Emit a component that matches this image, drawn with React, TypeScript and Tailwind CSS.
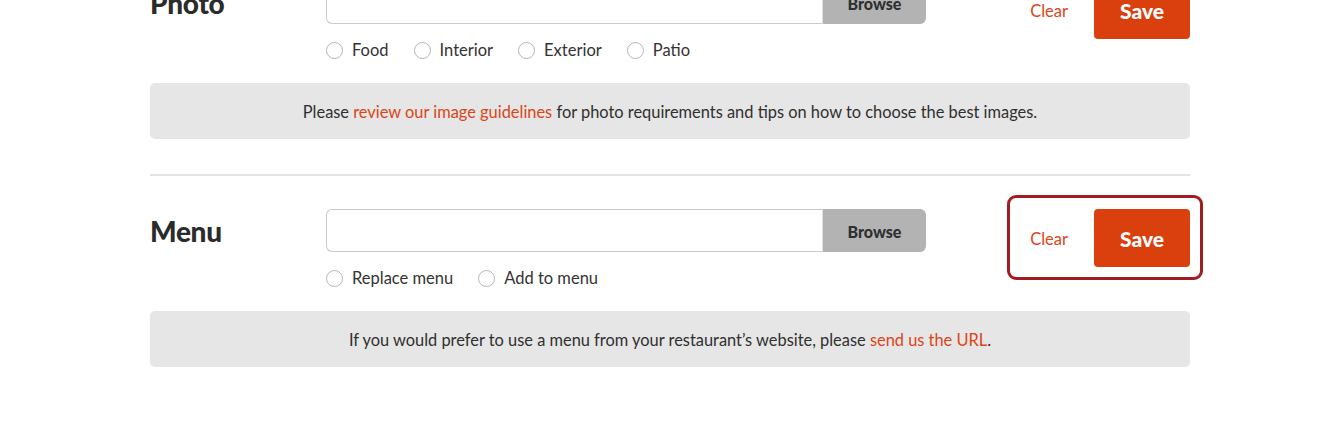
import React from "react";

type Props = {
  title: string;
  options: string[];
  info: React.ReactNode;
  highlight?: boolean;
};

function Radio({ label }: { label: string }) {
  return (
    <label className="flex items-center gap-[9px] text-[16.5px] text-[#333]">
      <span className="block w-[17px] h-[17px] rounded-full border-[1.5px] border-[#b5b5b5] bg-white" />
      <span className="pt-[1px]">{label}</span>
    </label>
  );
}

function Section({ title, options, info, highlight }: Props) {
  return (
    <div>
      <div className="flex items-start">
        <div className="w-[176px] h-[43px] flex items-center text-[28px] font-black text-[#2b2b2b] tracking-[-0.3px]">
          {title}
        </div>
        <div className="w-[600px]">
          <div className="flex h-[43px]">
            <div className="flex-1 border-[1.5px] border-r-0 border-[#cacaca] rounded-l-[6px] bg-white" />
            <button className="w-[104px] pt-[3px] bg-[#b3b3b3] border-l-[1.5px] border-[#e2e2e2] rounded-r-[6px] text-[16px] font-black text-[#2f2f2f]">
              Browse
            </button>
          </div>
          <div className="flex items-center gap-[25px] mt-[17px] h-[18px]">
            {options.map((o) => (
              <Radio key={o} label={o} />
            ))}
          </div>
        </div>
        <div className="ml-auto relative flex items-center gap-[26px]">
          {highlight && (
            <div className="absolute -left-[23px] -right-[13px] -top-[14px] -bottom-[13px] border-[3px] border-[#a11d22] rounded-[9px]" />
          )}
          <span className="pt-[3px] text-[16.5px] text-[#dd4417]">Clear</span>
          <button className="w-[96px] h-[58px] pt-[2px] bg-[#d9400e] rounded-[4px] text-white text-[21px] font-black">
            Save
          </button>
        </div>
      </div>
      <div className="mt-[24px] h-[56px] pt-[3px] bg-[#e6e6e6] rounded-[5px] flex items-center justify-center text-[16.4px] text-[#2f2f2f]">
        <p>{info}</p>
      </div>
    </div>
  );
}

export default function App() {
  return (
    <div className="w-full h-[430px] bg-white overflow-hidden font-['Lato',sans-serif]">
      <div className="mx-auto w-[1040px] mt-[-19px]">
        <Section
          title="Photo"
          options={["Food", "Interior", "Exterior", "Patio"]}
          info={
            <>
              Please <span className="text-[#dd4417]">review our image guidelines</span> for photo
              requirements and tips on how to choose the best images.
            </>
          }
        />
        <div className="mt-[35px] h-[2px] bg-[#e4e4e4]" />
        <div className="mt-[33px]">
          <Section
            title="Menu"
            highlight
            options={["Replace menu", "Add to menu"]}
            info={
              <>
                If you would prefer to use a menu from your restaurant’s website, please{" "}
                <span className="text-[#dd4417]">send us the URL</span>.
              </>
            }
          />
        </div>
      </div>
    </div>
  );
}
